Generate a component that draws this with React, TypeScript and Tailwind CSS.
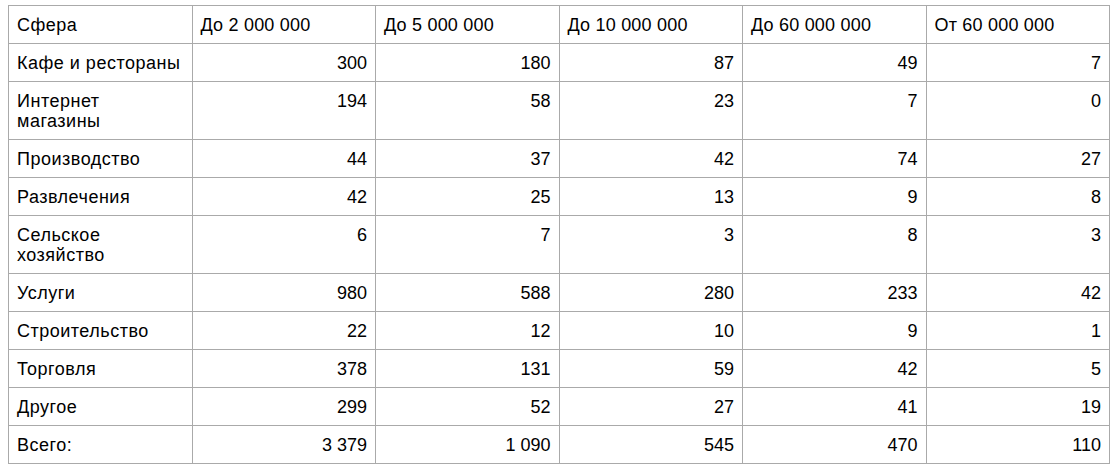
import React from "react";

const headers = ["Сфера", "До 2 000 000", "До 5 000 000", "До 10 000 000", "До 60 000 000", "От 60 000 000"];

const rows: [string, string[]][] = [
  ["Кафе и рестораны", ["300", "180", "87", "49", "7"]],
  ["Интернет магазины", ["194", "58", "23", "7", "0"]],
  ["Производство", ["44", "37", "42", "74", "27"]],
  ["Развлечения", ["42", "25", "13", "9", "8"]],
  ["Сельское хозяйство", ["6", "7", "3", "8", "3"]],
  ["Услуги", ["980", "588", "280", "233", "42"]],
  ["Строительство", ["22", "12", "10", "9", "1"]],
  ["Торговля", ["378", "131", "59", "42", "5"]],
  ["Другое", ["299", "52", "27", "41", "19"]],
  ["Всего:", ["3 379", "1 090", "545", "470", "110"]],
];

export default function App() {
  return (
    <div className="bg-white w-[1115px] h-[471px] pt-[5px] pl-2" style={{ fontFamily: '"Liberation Sans", Arial, sans-serif' }}>
      <table className="w-[1102px] table-fixed border-collapse text-[18px] leading-[20px] text-black">
        <thead>
          <tr>
            {headers.map((h, i) => (
              <th
                key={h}
                className={
                  i === 0
                    ? "border border-[#aaaaaa] font-normal text-left align-top pt-[9px] pb-[8px] pl-2 pr-2 tracking-[0.5px]"
                    : "border border-[#aaaaaa] font-normal text-left align-top pt-[9px] pb-[8px] pl-2 pr-2 tracking-[0.2px]"
                }
              >
                {h}
              </th>
            ))}
          </tr>
        </thead>
        <tbody>
          {rows.map(([name, vals]) => (
            <tr key={name}>
              <td className="border border-[#aaaaaa] text-left align-top pt-[9px] pb-[8px] pl-2 pr-2 tracking-[0.5px]">{name}</td>
              {vals.map((v, i) => (
                <td key={i} className="border border-[#aaaaaa] text-right align-top pt-[9px] pb-[8px] pl-2 pr-2">
                  {v}
                </td>
              ))}
            </tr>
          ))}
        </tbody>
      </table>
    </div>
  );
}
